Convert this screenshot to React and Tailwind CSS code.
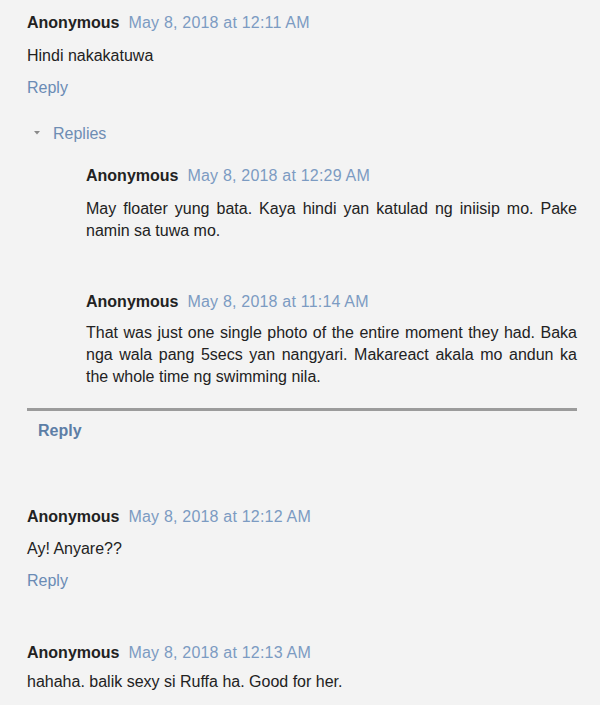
export default function App() {
  const font = { fontFamily: '"Liberation Sans", Arial, sans-serif' };
  const Header = ({ date, className = "" }) => (
    <div className={"flex items-baseline leading-[22px] h-[22px] " + className}>
      <span className="font-bold text-[#222]">Anonymous</span>
      <span className="ml-[9px] tracking-[0.2px] text-[#7c9bc2]">{date}</span>
    </div>
  );
  return (
    <div
      className="min-h-[705px] w-[600px] bg-[#f3f3f3] pl-[27px] pr-[23px] pt-[12px] text-[16px] text-[#222] overflow-hidden"
      style={font}
    >
      {/* Comment 1 */}
      <div>
        <Header date="May 8, 2018 at 12:11 AM" />
        <p className="mt-[11px] leading-[22px]">Hindi nakakatuwa</p>
        <div className="mt-[10px] leading-[22px] text-[#6a8bb5]">Reply</div>

        <div className="mt-[24px] flex items-center leading-[22px] pl-[7px]">
          <svg width="6" height="4" viewBox="0 0 6 4" className="mt-[-3px]">
            <path d="M0 0 L6 0 L3 3.5 Z" fill="#8a8a8a" />
          </svg>
          <span className="ml-[13px] text-[#6e8db3]">Replies</span>
        </div>

        <div className="pl-[59px]">
          <div className="mt-[20px]">
            <Header date="May 8, 2018 at 12:29 AM" />
            <p className="mt-[11px] leading-[22px] text-justify">
              May floater yung bata. Kaya hindi yan katulad ng iniisip mo. Pake namin sa tuwa mo.
            </p>
          </div>
          <div className="mt-[49px]">
            <Header date="May 8, 2018 at 11:14 AM" />
            <p className="mt-[9px] leading-[22px] text-justify">
              That was just one single photo of the entire moment they had. Baka nga wala pang 5secs yan nangyari. Makareact akala mo andun ka the whole time ng swimming nila.
            </p>
          </div>
        </div>

        <div className="mt-[20px] h-[3px] bg-[#9b9b9b]" />
        <div className="mt-[9px] pl-[11px] leading-[22px] font-bold text-[#5d7ea6]">Reply</div>
      </div>

      {/* Comment 2 */}
      <div className="mt-[64px]">
        <Header date="May 8, 2018 at 12:12 AM" />
        <p className="mt-[10px] leading-[22px]">Ay! Anyare??</p>
        <div className="mt-[10px] leading-[22px] text-[#6a8bb5]">Reply</div>
      </div>

      {/* Comment 3 */}
      <div className="mt-[50px]">
        <Header date="May 8, 2018 at 12:13 AM" />
        <p className="mt-[7px] leading-[22px]">hahaha. balik sexy si Ruffa ha. Good for her.</p>
      </div>
    </div>
  );
}
